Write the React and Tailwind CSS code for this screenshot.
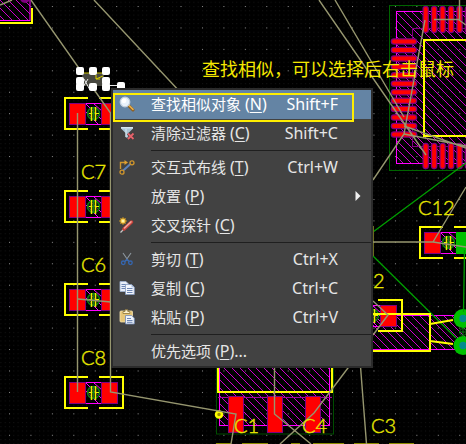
import React from "react";

const FONT = "font-['Noto_Sans','Noto_Sans_CJK_SC',sans-serif]";

function SearchIcon() {
  return (
    <svg width="16" height="16" viewBox="0 0 16 16" aria-hidden="true">
      <path d="M9.5 9.5L14 14" stroke="#8a5a1c" strokeWidth="3" strokeLinecap="round" />
      <path d="M9.8 9.3L14 13.4" stroke="#e8b04c" strokeWidth="1.6" strokeLinecap="round" />
      <circle cx="6" cy="6" r="4.8" fill="#e9f2fb" stroke="#c3cfdc" strokeWidth="1.2" />
      <circle cx="5" cy="4.8" r="2.4" fill="#ffffff" />
    </svg>
  );
}

function FilterIcon() {
  return (
    <svg width="16" height="16" viewBox="0 0 16 16" aria-hidden="true">
      <path d="M2 2H14V3.5L9.5 8V14L6.5 12V8L2 3.5Z" fill="#a9c4d4" />
      <path d="M2 2H14V3.5H2Z" fill="#d5e6ef" />
      <path d="M7 4V12" stroke="#dcebf2" />
      <path d="M9 8.5L14.5 14M14.5 8.5L9 14" stroke="#4a3032" strokeWidth="3" />
      <path d="M9 8.5L14.5 14M14.5 8.5L9 14" stroke="#e5646c" strokeWidth="1.8" />
    </svg>
  );
}

function RouteIcon() {
  return (
    <svg width="16" height="16" viewBox="0 0 16 16" fill="none" aria-hidden="true">
      <path d="M4.2 11.5L11.5 5" stroke="#5b82bd" strokeWidth="2" />
      <path d="M1.5 10V3.5H6" stroke="#d0962c" strokeWidth="1.4" />
      <path d="M5.5 1L9 3.5L5.5 6Z" fill="#e0a030" />
      <circle cx="13" cy="3.8" r="2" stroke="#d0962c" strokeWidth="1.3" />
      <circle cx="3" cy="13.2" r="2" stroke="#d0962c" strokeWidth="1.3" />
    </svg>
  );
}

function ProbeIcon() {
  return (
    <svg width="16" height="16" viewBox="0 0 16 16" aria-hidden="true">
      <path d="M1.500 15.500L5 12" stroke="#c9c9c9" strokeWidth="1.2" />
      <path d="M5 12L12.500 5" stroke="#c8423c" strokeWidth="3.500" strokeLinecap="round" />
      <path d="M5.5 11L12 4.800" stroke="#f3a59a" strokeWidth="1.6" strokeLinecap="round" />
      <path d="M1.5 1.5L6.500 6.500M6.500 1.5L1.5 6.500M4 0.5V7.500M0.5 4H7.500" stroke="#f2b01e" strokeWidth="1.4" />
      <rect x="2.500" y="2.500" width="3" height="3" fill="#fff7a8" />
    </svg>
  );
}

function CutIcon() {
  return (
    <svg width="16" height="16" viewBox="0 0 16 16" fill="none" aria-hidden="true">
      <path d="M4 2L9.5 10M12 2L6.5 10" stroke="#8d979f" strokeWidth="1.1" />
      <circle cx="4.3" cy="11.8" r="1.8" stroke="#3566b0" strokeWidth="1.3" />
      <circle cx="11.4" cy="11.8" r="1.8" stroke="#3566b0" strokeWidth="1.3" />
      <path d="M6 10.5L8 8.5L10 10.5" stroke="#3566b0" strokeWidth="1.3" />
    </svg>
  );
}

function CopyIcon() {
  return (
    <svg width="16" height="16" viewBox="0 0 16 16" aria-hidden="true">
      <path d="M1 1.5H7L9.5 4V11.5H1Z" fill="#e8eef8" stroke="#9fb2d0" strokeWidth="0.8" />
      <path d="M2.5 4.5H7M2.5 6.5H7M2.5 8.5H7" stroke="#6d86b4" />
      <path d="M6.5 4.5H12.5L15.3 7.2V14.5H6.5Z" fill="#f1f5fc" stroke="#8499bf" strokeWidth="0.8" />
      <path d="M8 8.5H13.5M8 10.5H13.5M8 12.5H13.5" stroke="#6d86b4" />
      <path d="M12.5 4.5V7.2H15.3Z" fill="#a9bde0" />
    </svg>
  );
}

function PasteIcon() {
  return (
    <svg width="16" height="16" viewBox="0 0 16 16" aria-hidden="true">
      <rect x="1" y="2" width="12.5" height="11" rx="1" fill="#e7c778" stroke="#f5e2ae" strokeWidth="0.8" />
      <path d="M4 4.5V2.5H6V0.8H8.8V2.5H10.8V4.5Z" fill="#fdf3cf" stroke="#8e7434" strokeWidth="0.8" />
      <path d="M6.5 6.5H12.5L15.3 9V15H6.5Z" fill="#eef3fb" stroke="#7189b5" strokeWidth="0.8" />
      <path d="M8 9.5H12M8 11.5H13.5M8 13.3H13.5" stroke="#6d86b4" />
    </svg>
  );
}

const groups = [
  [
    { label: "查找相似对象", mnemonic: "N", shortcut: "Shift+F", Icon: SearchIcon, active: true },
    { label: "清除过滤器", mnemonic: "C", shortcut: "Shift+C", Icon: FilterIcon },
  ],
  [
    { label: "交互式布线", mnemonic: "T", shortcut: "Ctrl+W", Icon: RouteIcon },
    { label: "放置", mnemonic: "P", submenu: true },
    { label: "交叉探针", mnemonic: "C", Icon: ProbeIcon },
  ],
  [
    { label: "剪切", mnemonic: "T", shortcut: "Ctrl+X", Icon: CutIcon },
    { label: "复制", mnemonic: "C", shortcut: "Ctrl+C", Icon: CopyIcon },
    { label: "粘贴", mnemonic: "P", shortcut: "Ctrl+V", Icon: PasteIcon },
  ],
  [{ label: "优先选项", mnemonic: "P", suffix: "..." }],
];

function MenuItem({ label, mnemonic, suffix, shortcut, Icon, active, submenu }) {
  return (
    <button
      type="button"
      role="menuitem"
      aria-haspopup={submenu ? "menu" : undefined}
      className={`flex h-[29px] w-full items-center pb-0.5 pl-1.5 text-left text-[15px] leading-5 whitespace-nowrap ${
        active ? "bg-[#6484a4] text-white" : "text-[#e6e6e6]"
      }`}
    >
      <span className="w-8 shrink-0">{Icon && <Icon />}</span>
      <span className="flex-1">
        {label} <span className="text-base leading-5">(<span className="underline underline-offset-2">{mnemonic}</span>){suffix}</span>
      </span>
      {shortcut && <span className="pr-[33px] text-base leading-5">{shortcut}</span>}
      {submenu && (
        <svg className="mr-2.5" width="6" height="10" viewBox="0 0 6 10" aria-hidden="true">
          <path d="M0.500 0L5.500 5L0.500 10Z" fill="#f0f0f0" />
        </svg>
      )}
    </button>
  );
}

function ContextMenu() {
  return (
    <div
      role="menu"
      className="absolute top-[88px] left-[111px] w-[262px] border-2 border-[#2b2b2b] bg-[#424242]"
    >
      {groups.map((items, i) => (
        <React.Fragment key={i}>
          {i > 0 && (
            <div role="separator" className="ml-[38px] py-0.5">
              <div className="h-px bg-[#1f1f1f]" />
            </div>
          )}
          {items.map((item) => (
            <MenuItem key={item.label} {...item} />
          ))}
        </React.Fragment>
      ))}
      <div className="pointer-events-none absolute top-[3px] left-0 h-[29px] w-[241px] border-2 border-[#ffee00]" />
    </div>
  );
}

function Capacitor({ x, y, rightPad = "#ff0000" }) {
  return (
    <g transform={`translate(${x} ${y})`}>
      <path d="M24 1H1V32H24M35 1H59V32H35" stroke="#ffff00" strokeWidth="2" fill="none" />
      <path d="M21 6.500H38M21 27.500H38M22 7L38 23M21 14L34 27M30 7L38 14" stroke="#ff00ff" fill="none" />
      <rect x="5.500" y="6.500" width="16" height="21" fill="#ff0000" stroke="#800080" />
      <rect
        x="37.500"
        y="6.500"
        width="16"
        height="21"
        fill={rightPad}
        stroke={rightPad === "#ff0000" ? "#800080" : rightPad}
      />
      <circle cx="29.500" cy="16.500" r="6" fill="#0b2a0b" fillOpacity="0.700" stroke="#0a8214" strokeWidth="1.500" />
      <path d="M24 16.500H36M29.500 11V23" stroke="#0a8214" />
      <path d="M27.500 10V24M31.500 10V24" stroke="#f0f000" strokeWidth="1.500" />
      <path d="M25 16.500H28M32 16.500H35" stroke="#f0f000" />
    </g>
  );
}

const sidePins = Array.from({ length: 12 }, (_, i) => 41.5 + i * 8.45);
const rowPins = Array.from({ length: 6 }, (_, i) => 425.7 + i * 8.45);

function Pin({ d }) {
  return (
    <g strokeLinecap="round">
      <path d={d} stroke="#800080" strokeWidth="6.500" />
      <path d={d} stroke="#ff0000" strokeWidth="4" />
    </g>
  );
}

const handles = [
  [80, 71], [93, 71], [106, 71],
  [80, 81], [106, 81],
  [80, 87], [93, 87], [106, 87], [121, 86],
];

const designators = [
  ["C7", 81, 179], ["C6", 81, 272], ["C8", 81, 365], ["C12", 418, 215],
  ["2", 373, 288], ["C1", 234, 433], ["C4", 302, 433], ["C3", 371, 433],
];

function Board() {
  return (
    <svg className="absolute top-0 left-0" width="466" height="444" viewBox="0 0 466 444" aria-hidden="true">
      <defs>
        <pattern id="minor" width="4.288" height="4.288" x="9" y="6" patternUnits="userSpaceOnUse">
          <rect width="1" height="1" fill="#151515" />
        </pattern>
        <pattern id="major" width="21.440" height="21.440" x="9" y="6" patternUnits="userSpaceOnUse">
          <rect width="1" height="1" fill="#8a8a8a" />
        </pattern>
        <pattern id="hatch" width="8" height="8" patternUnits="userSpaceOnUse">
          <path d="M-1 -1L9 9M-1 7L1 9M7 -1L9 1" stroke="#ff00ff" strokeWidth="0.800" />
        </pattern>
      </defs>
      <rect width="466" height="444" fill="url(#minor)" />
      <rect width="466" height="444" fill="url(#major)" />

      {/* connector, upper left */}
      <rect x="-4" y="-4" width="34" height="24.500" fill="url(#hatch)" stroke="#ff00ff" />
      <circle cx="25" cy="-2" r="5" fill="#800080" />
      <path d="M0 23H32V8" stroke="#ffff00" strokeWidth="2" fill="none" />

      {/* quad package, upper right */}
      <rect x="389.500" y="5.500" width="90" height="165" fill="none" stroke="#006400" />
      <rect x="396.500" y="11.500" width="90" height="152" fill="url(#hatch)" stroke="#ff00ff" />
      <rect x="412.500" y="28.500" width="70" height="118" fill="none" stroke="#800080" />
      {sidePins.map((y) => <Pin key={y} d={`M394 ${y}H414`} />)}
      {rowPins.map((x) => <Pin key={x} d={`M${x} 9V30`} />)}
      {rowPins.map((x) => <Pin key={x} d={`M${x} 146V166`} />)}
      <rect x="424" y="40" width="60" height="96" fill="none" stroke="#ffff00" strokeWidth="2" />

      {/* regulator, bottom */}
      <rect x="216.500" y="340" width="117" height="94" fill="none" stroke="#004d00" />
      <rect x="219.500" y="340" width="110" height="85.500" fill="url(#hatch)" stroke="#ff00ff" />
      <path d="M218 397.500H332" stroke="#a000a0" />
      {[229, 268, 306].map((x) => (
        <rect key={x} x={x - 0.5} y="396.500" width="15" height="36" fill="#ff0000" stroke="#800080" />
      ))}
      <path d="M218 340V392H332V340" stroke="#ffff00" strokeWidth="2" fill="none" />
      <circle cx="219" cy="414.500" r="3" fill="#a09000" stroke="#ffff00" strokeWidth="2.500" />
      <path d="M216 443.500H231M242 443.500H268M291 443.500H300M313 443.500H344M354 443.500H379M389 443.500H414" stroke="#8a8a00" />

      {/* crystal, lower right */}
      <rect x="350" y="315.500" width="130" height="34" fill="url(#hatch)" stroke="#ff00ff" />
      <path d="M373 256L456 338" stroke="#00a000" strokeWidth="1.300" />
      <Capacitor x={64} y={97} />
      <Capacitor x={64} y={190} />
      <Capacitor x={64} y={283} />
      <Capacitor x={64} y={376} />
      <Capacitor x={419} y={226} rightPad="#00c000" />
      <Capacitor x={343} y={299} />
      <path d="M350 314H430V351H350M430 324L453 320M430 341L453 344" stroke="#ffff00" strokeWidth="2" fill="none" />
      <circle cx="463" cy="332" r="3.500" fill="none" stroke="#0a7a12" />
      <path d="M459 332H466M463 328V336" stroke="#0a7a12" />
      {[318.5, 345.5].map((y) => (
        <g key={y}>
          <circle cx="463" cy={y} r="9.500" fill="#00c000" />
          <circle cx="463" cy={y} r="3.700" fill="#008c8c" />
        </g>
      ))}

      {/* unrouted nets */}
      <path d="M466 163L373 232M464.500 250L463.500 312" stroke="#00a000" strokeWidth="1.300" fill="none" />
      <path d="M373.500 226V256" stroke="#6a6a20" />
      <g stroke="#96966f" strokeWidth="1.400" fill="none">
        <path d="M0 5L12 0M31 0L110.500 113V392L236 414L231 444M77.500 113V392M94 0L182 94" />
        <path d="M335 0L404 117M319 0L426 155M425 20L404 134L373 180M404 126L466 148M404 134L466 146" />
        <path d="M434 19.500H459.500V0M459 20L466 25" />
        <path d="M466 187L433 242M373 242H433L466 247M373 301L388 315L373 335M78 299L111 302" />
        <path d="M274.500 360V414L311 444M354 360L314 413L280 444M360 360L366.500 444" />
      </g>

      {/* selected part with its grips */}
      <rect x="82" y="73" width="22" height="13" fill="#484840" />
      <path d="M84 73H103" stroke="#c8c000" />
      <path d="M96 75V79L103 76M96 79H100" stroke="#d8d000" fill="none" />
      <path d="M84 79L90 90M88 79L83 87M106 85.500H121" stroke="#e8e8e8" fill="none" />
      {handles.map(([x, y]) => (
        <rect key={`${x}-${y}`} x={x - 4} y={y - 4} width="8" height="8" rx="2" fill="#ffffff" />
      ))}

      <g className="font-['Lato',sans-serif]" fontWeight="300" fontSize="20" fill="#e6e600" stroke="#e6e600" strokeWidth="0.400">
        {designators.map(([name, x, y]) => (
          <text key={name} x={x} y={y}>{name}</text>
        ))}
      </g>
    </svg>
  );
}

export default function App() {
  return (
    <main className={`relative min-h-screen overflow-hidden bg-black ${FONT}`}>
      <Board />
      <p className="absolute top-[57px] left-[202px] text-[18px] leading-6 whitespace-nowrap text-[#f5e800]">
        查找相似，可以选择后右击鼠标
      </p>
      <ContextMenu />
    </main>
  );
}
